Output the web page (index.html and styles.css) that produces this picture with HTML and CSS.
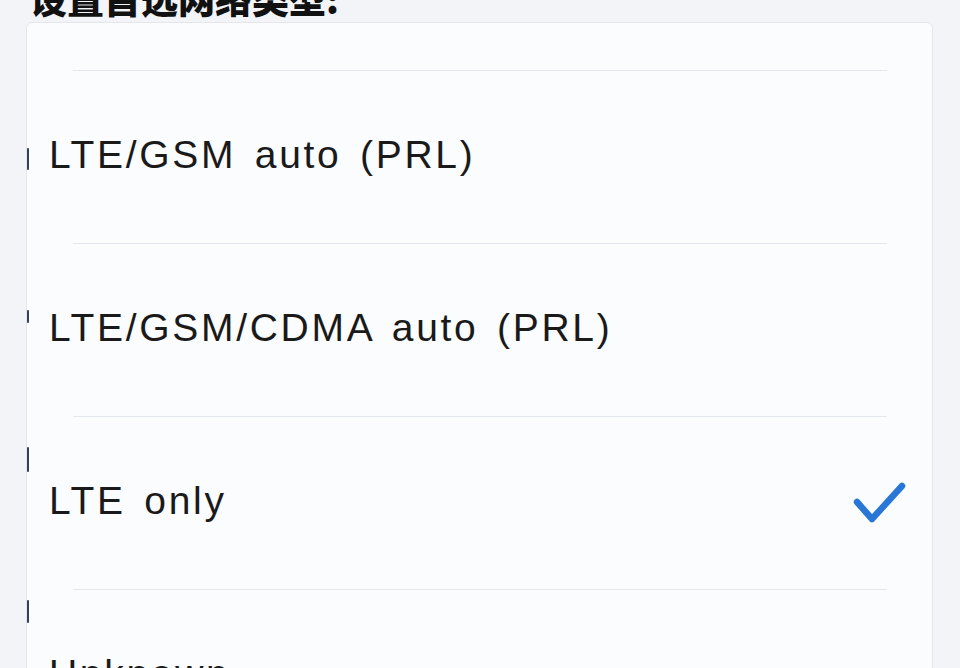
FILE: index.html
```html
<!DOCTYPE html>
<html lang="zh">
<head>
<meta charset="utf-8">
<link rel="stylesheet" href="styles.css">
</head>
<body>
<h1 class="title">设置首选网络类型:</h1>
<div class="card">
  <span class="tick t1"></span>
  <span class="tick t2"></span>
  <span class="tick t3"></span>
  <span class="tick t4"></span>
  <div class="item"><span class="label">LTE/GSM auto (PRL)</span></div>
  <div class="item"><span class="label">LTE/GSM/CDMA auto (PRL)</span></div>
  <div class="item"><span class="label">LTE only</span>
    <svg class="check" width="54" height="42" viewBox="0 0 54 42"><path d="M5 20 L20 37 L50 4" fill="none" stroke="#2877d6" stroke-width="6.5" stroke-linecap="round" stroke-linejoin="round"/></svg>
  </div>
  <div class="item"><span class="label">Unknown</span></div>
</div>
</body>
</html>
```

FILE: styles.css
```css
html, body {
  margin: 0;
  padding: 0;
  background: #f3f4f7;
  overflow: hidden;
  height: 668px;
}
.title {
  margin: -24px 0 0 30px;
  font-family: "Noto Sans CJK SC", sans-serif;
  font-weight: 900;
  font-size: 37px;
  line-height: 44px;
  color: #111;
}
.card {
  position: relative;
  box-sizing: border-box;
  margin: 2px 0 0 26px;
  width: 907px;
  background: #fbfcfe;
  border: 1px solid #e4e6ea;
  border-radius: 6px;
  padding-top: 47px;
}
.tick {
  position: absolute;
  left: 0;
  width: 2px;
  background: #34405c;
  border-radius: 1px;
}
.t1 { top: 125px; height: 22px; }
.t2 { top: 287px; height: 13px; }
.t3 { top: 424px; height: 25px; }
.t4 { top: 577px; height: 23px; }
.item {
  position: relative;
  height: 173px;
  display: flex;
  align-items: center;
  justify-content: space-between;
  padding: 0 26px 0 22px;
  box-sizing: border-box;
}
.item::before {
  content: "";
  position: absolute;
  top: 0;
  left: 46px;
  right: 45px;
  height: 1px;
  background: #e3e7ee;
}
.label {
  font-family: "Liberation Sans", Arial, sans-serif;
  font-size: 39px;
  color: #1a1a1a;
  letter-spacing: 2.7px;
  word-spacing: 5px;
  padding-bottom: 4px;
}
```
